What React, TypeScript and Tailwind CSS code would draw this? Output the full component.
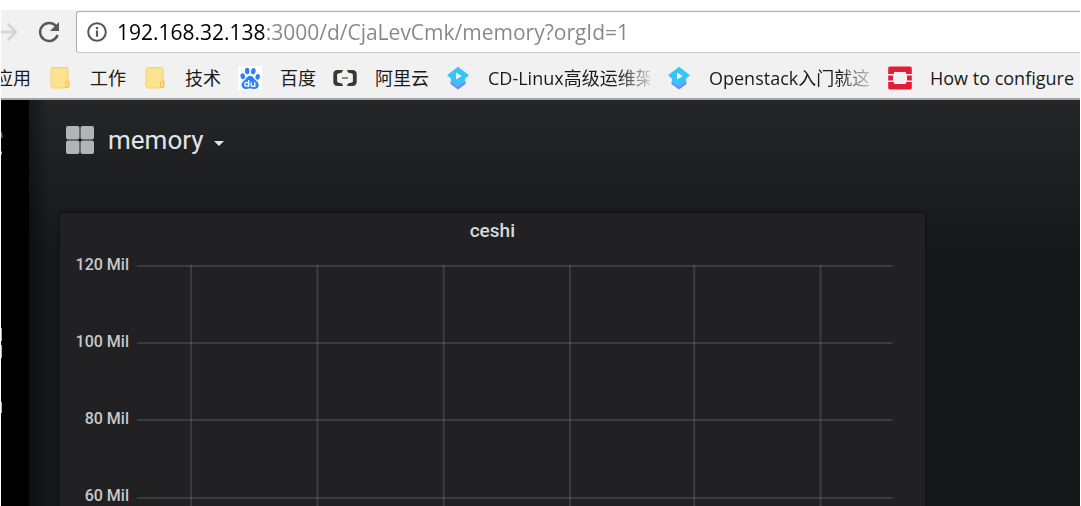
import React from "react";

const uiFont = "font-['Open_Sans','Noto_Sans_CJK_SC',sans-serif]";

function FolderIcon() {
  return (
    <svg className="size-6 shrink-0" viewBox="0 0 24 24" aria-hidden="true">
      <path d="M4.5 1.5h14a1.5 1.5 0 0 1 1.500 1.500v11.500h1v6.500h-3v1H4.500a1.500 1.500 0 0 1-1.500-1.500v-17.500a1.500 1.500 0 0 1 1.500-1.500z" fill="#fde28f" stroke="#f5cf66" />
      <path d="M17.500 21.500v-4.500q0-1.500 1.500-1.500t1.500 1.500v4.500z" fill="#fde28f" stroke="#eec350" />
    </svg>
  );
}

function PawIcon() {
  return (
    <svg className="size-6 shrink-0" viewBox="0 0 24 24" aria-hidden="true">
      <rect width="24" height="24" fill="#fff" />
      <g fill="#2e82f7">
        <ellipse cx="4.800" cy="10.300" rx="2.300" ry="3" transform="rotate(-12 4.800 10.300)" />
        <ellipse cx="9.200" cy="5" rx="2.300" ry="3.200" />
        <ellipse cx="15.300" cy="5.200" rx="2.300" ry="3.200" transform="rotate(10 15.300 5.200)" />
        <ellipse cx="19.700" cy="10.800" rx="2.200" ry="2.900" transform="rotate(8 19.700 10.800)" />
        <path d="M12 9.700c2.200 0 3.200 1.700 4.500 3.300 1.600 1.900 4.300 3 4.200 6 0 2.500-1.900 4-4.200 4-1.800 0-3-.5-4.500-.5s-2.700.5-4.500.5c-2.300 0-4-1.700-4-4 0-3 2.600-4.200 4.200-6.100C9 11.300 9.900 9.700 12 9.700z" />
      </g>
      <g fill="none" stroke="#fff" strokeWidth="1.300">
        <circle cx="8.700" cy="18.300" r="1.900" />
        <path d="M10.700 14v6.700M13.200 16.200v2.300q0 1.900 1.900 1.900h1.700v-4.200" />
      </g>
    </svg>
  );
}

function BracketIcon() {
  return (
    <svg className="size-6 shrink-0" viewBox="0 0 24 24" aria-hidden="true">
      <path d="M10 4H4.500A4 4 0 0 0 .3 8v8a4 4 0 0 0 4.200 4H10l-1-2.600-3.900-.9a1.200 1.200 0 0 1-1-1.200V8.700a1.200 1.200 0 0 1 1-1.200L9 6.600zM14 4h5.500a4 4 0 0 1 4.200 4v8a4 4 0 0 1-4.200 4H14l1-2.600 3.900-.9a1.200 1.200 0 0 0 1-1.200V8.700a1.200 1.200 0 0 0-1-1.200L15 6.600z" fill="#3a3735" />
      <path d="M9 12h6" stroke="#77736f" strokeWidth="1.600" />
    </svg>
  );
}

function CourseIcon() {
  return (
    <svg className="size-6 shrink-0" viewBox="0 0 24 24" aria-hidden="true">
      <path d="M4.500 15v3l7.500 5.500 7.500-5.500v-3L12 20z" fill="#7b86f8" />
      <path d="M12 .8 23 9.300l-4 3.500v3.400L12 20.500l-7-4.300v-3.400L1 9.300z" fill="#36c5fb" />
      <path d="M10 6.500v7l5.500-3.500z" fill="#fff" />
    </svg>
  );
}

function StackIcon() {
  return (
    <svg className="size-6 shrink-0" viewBox="0 0 24 24" aria-hidden="true">
      <g fill="#e31c38">
        <path d="M2 .5h20A1.700 1.700 0 0 1 23.800 2.200V8H18V6H6v2H.2V2.200A1.700 1.700 0 0 1 2 .5z" />
        <path d="M.2 9.500H5v5H.2zM19 9.500h4.800v5H19z" />
        <path d="M.2 16H6v2h12v-2h5.800v5.800a1.700 1.700 0 0 1-1.800 1.700H2a1.700 1.700 0 0 1-1.800-1.700z" />
      </g>
    </svg>
  );
}

const bookmarks = [
  { label: "应用", icon: null, fade: false },
  { label: "工作", icon: <FolderIcon />, fade: false },
  { label: "技术", icon: <FolderIcon />, fade: false },
  { label: "百度", icon: <PawIcon />, fade: false },
  { label: "阿里云", icon: <BracketIcon />, fade: false },
  { label: "CD-Linux高级运维架", icon: <CourseIcon />, fade: true },
  { label: "Openstack入门就这", icon: <CourseIcon />, fade: true },
  { label: "How to configure", icon: <StackIcon />, fade: false },
];

const ticks = ["120 Mil", "100 Mil", "80 Mil", "60 Mil"];
const columns = [54, 180, 306, 432, 556, 682];

function Toolbar() {
  return (
    <div className="flex h-[43px] items-stretch pt-px">
      <button type="button" aria-label="Forward" className="-ml-2 flex w-7 items-center justify-center">
        <svg className="h-6 w-7" viewBox="0 0 28 24" fill="none" stroke="#d3d3d3" strokeWidth="2.400" aria-hidden="true">
          <path d="M4 12h19M14.500 3.500 23 12l-8.500 8.500" />
        </svg>
      </button>
      <button type="button" aria-label="Reload" className="flex w-[55px] items-center justify-center">
        <svg className="size-6" viewBox="0 0 24 24" aria-hidden="true">
          <path d="M19.300 6.600A9 9 0 1 0 20.600 15" fill="none" stroke="#58595b" strokeWidth="2.500" />
          <path d="M22 2v9h-9z" fill="#58595b" />
        </svg>
      </button>
      <div className="flex flex-1 items-center gap-2.5 rounded-l-[3px] border border-r-0 border-[#adadad] border-b-[#c8c8c8] bg-white pl-2.5">
        <svg className="size-5 shrink-0" viewBox="0 0 20 20" aria-hidden="true">
          <circle cx="10" cy="10" r="8.800" fill="none" stroke="#555" strokeWidth="2" />
          <path d="M10 8.600v6.200M10 5v2.300" stroke="#555" strokeWidth="2.200" />
        </svg>
        <input
          type="text"
          aria-label="Address"
          defaultValue="192.168.32.138:3000/d/CjaLevCmk/memory?orgId=1"
          className="min-w-0 flex-1 bg-[linear-gradient(90deg,#000_149px,#868686_149px)] bg-clip-text text-[21px] leading-8 text-transparent outline-none"
        />
      </div>
    </div>
  );
}

function Bookmarks() {
  return (
    <nav aria-label="Bookmarks" className="-ml-1.5 flex h-[45px] items-center gap-[17px] pt-1">
      {bookmarks.map((b) => (
        <a key={b.label} href="#" className="flex shrink-0 items-center gap-[18px] text-lg leading-6 text-[#1a1a1a]">
          {b.icon}
          <span
            className={
              b.fade
                ? "w-[162px] overflow-hidden whitespace-nowrap [mask-image:linear-gradient(90deg,#000_130px,transparent_168px)]"
                : "whitespace-nowrap"
            }
          >
            {b.label}
          </span>
        </a>
      ))}
    </nav>
  );
}

function Sidebar() {
  return (
    <aside className="w-7 shrink-0 bg-black">
      <svg className="h-80 w-1" viewBox="0 0 4 320" fill="none" aria-hidden="true">
        <path d="M-2 30q3 2 3 8" stroke="#c4511c" strokeWidth="1.500" />
        <path d="M-1 53h2" stroke="#f0a030" strokeWidth="3" />
        <path d="M0 228v13M0 245v13M0 302v11" stroke="#d8d9da" strokeWidth="1.600" />
      </svg>
    </aside>
  );
}

function GraphPanel() {
  return (
    <section className="h-[520px] w-[85%] rounded-[4px] border-2 border-[#151516] bg-[#212123] pr-8">
      <h2 className="-mr-8 pt-1 text-center text-[19px] leading-7 font-medium text-[#d8d9da]">ceshi</h2>
      <div className="flex gap-2 pt-2.5">
        <ul className="w-[69px] shrink-0 text-right text-base leading-5 font-medium text-[#c8c9ca]">
          {ticks.map((t) => (
            <li key={t} className="h-[77px]">{t}</li>
          ))}
        </ul>
        <svg className="mt-2.5 h-80 min-w-0 flex-1" viewBox="0 0 754 320" preserveAspectRatio="none" fill="none" stroke="#fff" strokeOpacity="0.120" strokeWidth="2" aria-hidden="true">
          {[1, 78, 155, 233, 310].map((y) => (
            <path key={y} d={`M0 ${y}H754`} />
          ))}
          {columns.map((x) => (
            <path key={x} d={`M${x} 0V320`} />
          ))}
        </svg>
      </div>
    </section>
  );
}

export default function App() {
  return (
    <div className="flex h-screen flex-col overflow-hidden border-x border-white bg-white pt-2.5">
      <header className={`shrink-0 overflow-hidden border-b-2 border-[#a5a5a5] bg-[#f1f1f1] ${uiFont}`}>
        <Toolbar />
        <Bookmarks />
      </header>
      <div className="flex min-h-0 flex-1 overflow-hidden font-[Roboto,sans-serif]">
        <Sidebar />
        <main className="min-w-0 flex-1 bg-[linear-gradient(90deg,rgba(0,0,0,0.4),transparent_20px),linear-gradient(180deg,#242628,#161719_150px)] pl-[29px]">
          <div className="flex h-[111px] items-start pt-6">
            <button type="button" className="flex items-center pl-2 text-[26px] leading-8 text-[#e3e4e5]">
              <svg className="mr-3.5 size-7" viewBox="0 0 28 28" fill="#b3b4b5" aria-hidden="true">
                <rect width="13.500" height="13.500" rx="2" />
                <rect x="14.500" width="13.500" height="13.500" rx="2" />
                <rect y="14.500" width="13.500" height="13.500" rx="2" />
                <rect x="14.500" y="14.500" width="13.500" height="13.500" rx="2" />
              </svg>
              memory
              <svg className="mt-1.5 ml-2.5 h-[5px] w-2.5" viewBox="0 0 10 5" fill="#e3e4e5" aria-hidden="true">
                <path d="M0 0h10L5 5z" />
              </svg>
            </button>
          </div>
          <GraphPanel />
        </main>
      </div>
    </div>
  );
}
